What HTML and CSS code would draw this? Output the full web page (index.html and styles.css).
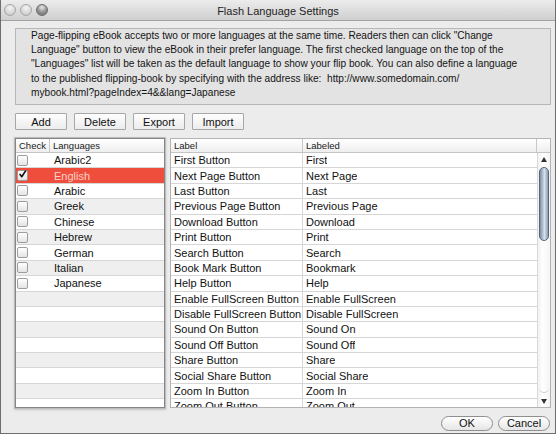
FILE: index.html
```html
<!DOCTYPE html>
<html>
<head>
<meta charset="utf-8">
<title>Flash Language Settings</title>
<link rel="stylesheet" href="styles.css">
</head>
<body>
<div class="window">
  <div class="titlebar">
    <div class="lights">
      <span class="light"></span><span class="light"></span><span class="light light-on"></span>
    </div>
    <div class="title">Flash Language Settings</div>
    <div></div>
  </div>
  <div class="content">
    <div class="desc">Page-flipping eBook accepts two or more languages at the same time. Readers then can click "Change<br>Language" button to view the eBook in their prefer language. The first checked language on the top of the<br>"Languages" list will be taken as the default language to show your flip book. You can also define a language<br>to the published flipping-book by specifying with the address like:&nbsp; http://www.somedomain.com/<br>mybook.html?pageIndex=4&amp;&amp;lang=Japanese</div>
    <div class="toolbar">
      <button class="btn">Add</button>
      <button class="btn">Delete</button>
      <button class="btn">Export</button>
      <button class="btn">Import</button>
    </div>
    <div class="tables">
      <div class="langs">
        <div class="thead">
          <div class="th th-check">Check</div>
          <div class="th">Languages</div>
        </div>
        <div class="lbody">
          <div class="lrow"><div class="cc"><span class="cb"></span></div><div class="lc">Arabic2</div></div>
          <div class="lrow sel"><div class="cc"><span class="cb"><svg viewBox="0 0 11 11" width="11" height="11"><path d="M2.5 5.4 L4.6 8.2 L9.2 1.2" fill="none" stroke="#111" stroke-width="1.9" stroke-linecap="round" stroke-linejoin="round"/></svg></span></div><div class="lc">English</div></div>
          <div class="lrow"><div class="cc"><span class="cb"></span></div><div class="lc">Arabic</div></div>
          <div class="lrow alt"><div class="cc"><span class="cb"></span></div><div class="lc">Greek</div></div>
          <div class="lrow"><div class="cc"><span class="cb"></span></div><div class="lc">Chinese</div></div>
          <div class="lrow alt"><div class="cc"><span class="cb"></span></div><div class="lc">Hebrew</div></div>
          <div class="lrow"><div class="cc"><span class="cb"></span></div><div class="lc">German</div></div>
          <div class="lrow alt"><div class="cc"><span class="cb"></span></div><div class="lc">Italian</div></div>
          <div class="lrow"><div class="cc"><span class="cb"></span></div><div class="lc">Japanese</div></div>
          <div class="lrow alt"></div>
          <div class="lrow"></div>
          <div class="lrow alt"></div>
          <div class="lrow"></div>
          <div class="lrow alt"></div>
          <div class="lrow"></div>
          <div class="lrow alt"></div>
          <div class="lrow"></div>
        </div>
      </div>
      <div class="labels">
        <div class="thead">
          <div class="th th-label">Label</div>
          <div class="th th-labeled">Labeled</div>
          <div class="th th-corner"></div>
        </div>
        <div class="rbody">
          <div class="rrows">
            <div class="rrow"><div class="rc rc1">First Button</div><div class="rc">First</div></div>
            <div class="rrow"><div class="rc rc1">Next Page Button</div><div class="rc">Next Page</div></div>
            <div class="rrow"><div class="rc rc1">Last Button</div><div class="rc">Last</div></div>
            <div class="rrow"><div class="rc rc1">Previous Page Button</div><div class="rc">Previous Page</div></div>
            <div class="rrow"><div class="rc rc1">Download Button</div><div class="rc">Download</div></div>
            <div class="rrow"><div class="rc rc1">Print Button</div><div class="rc">Print</div></div>
            <div class="rrow"><div class="rc rc1">Search Button</div><div class="rc">Search</div></div>
            <div class="rrow"><div class="rc rc1">Book Mark Button</div><div class="rc">Bookmark</div></div>
            <div class="rrow"><div class="rc rc1">Help Button</div><div class="rc">Help</div></div>
            <div class="rrow"><div class="rc rc1">Enable FullScreen Button</div><div class="rc">Enable FullScreen</div></div>
            <div class="rrow"><div class="rc rc1">Disable FullScreen Button</div><div class="rc">Disable FullScreen</div></div>
            <div class="rrow"><div class="rc rc1">Sound On Button</div><div class="rc">Sound On</div></div>
            <div class="rrow"><div class="rc rc1">Sound Off Button</div><div class="rc">Sound Off</div></div>
            <div class="rrow"><div class="rc rc1">Share Button</div><div class="rc">Share</div></div>
            <div class="rrow"><div class="rc rc1">Social Share Button</div><div class="rc">Social Share</div></div>
            <div class="rrow"><div class="rc rc1">Zoom In Button</div><div class="rc">Zoom In</div></div>
            <div class="rrow"><div class="rc rc1">Zoom Out Button</div><div class="rc">Zoom Out</div></div>
          </div>
          <div class="scrollbar">
            <div class="sb-arrow"><svg viewBox="0 0 6 5" width="6" height="5"><path d="M3 0 L6 5 L0 5 Z" fill="#333"/></svg></div>
            <div class="sb-thumb"></div>
            <div class="sb-track"></div>
            <div class="sb-arrow"><svg viewBox="0 0 6 5" width="6" height="5"><path d="M0 0 L6 0 L3 5 Z" fill="#333"/></svg></div>
          </div>
        </div>
      </div>
    </div>
    <div class="footer">
      <button class="pill">OK</button>
      <button class="pill">Cancel</button>
    </div>
  </div>
</div>
</body>
</html>
```

FILE: styles.css
```css
html, body {
  margin: 0;
  padding: 0;
  background: #ececec;
}

.window {
  width: 556px;
  height: 434px;
  box-sizing: border-box;
  border: 1px solid #6e6e6e;
  border-top: none;
  background: #ececec;
  display: flex;
  flex-direction: column;
  font-family: "Liberation Sans", Arial, sans-serif;
  color: #111;
  overflow: hidden;
}

.titlebar {
  height: 21px;
  box-sizing: border-box;
  border-bottom: 1px solid #a3a3a3;
  background: linear-gradient(#ececec, #cfcfcf);
  display: grid;
  grid-template-columns: 1fr auto 1fr;
  align-items: center;
}

.lights {
  display: flex;
  gap: 4px;
  padding-left: 3px;
}

.light {
  width: 12px;
  height: 12px;
  box-sizing: border-box;
  border-radius: 50%;
  border: 1px solid #a6a6a6;
  background: radial-gradient(circle at 50% 30%, #f4f4f4 0%, #d6d6d6 60%, #c4c4c4 100%);
}

.light-on {
  border-color: #6c6c6c;
  background: radial-gradient(circle at 50% 25%, #e8e8e8 0%, #9d9d9d 45%, #7a7a7a 75%, #a9a9a9 100%);
}

.title {
  font-size: 11px;
  color: #1e1e1e;
  white-space: nowrap;
  padding-top: 1px;
}

.content {
  flex: 1;
  display: flex;
  flex-direction: column;
  padding: 7px 4px 0 14px;
}

.desc {
  height: 77px;
  box-sizing: border-box;
  border: 1px solid #b7b7b7;
  background: #e3e3e3;
  padding: 0 0 0 15px;
  font-size: 10.15px;
  line-height: 14.2px;
  white-space: nowrap;
  overflow: hidden;
  color: #141414;
}

.toolbar {
  display: flex;
  gap: 7px;
  margin-top: 8px;
}

.btn {
  width: 52px;
  height: 17px;
  box-sizing: border-box;
  padding: 0;
  border: 1px solid #a7a7a7;
  border-radius: 1px;
  background: linear-gradient(#fefefe, #ececec);
  font-family: inherit;
  font-size: 11px;
  color: #111;
}

.tables {
  display: flex;
  gap: 5px;
  margin-top: 8px;
  height: 270px;
}

.langs {
  width: 150px;
  box-sizing: border-box;
  border: 1px solid #858585;
  box-shadow: 0 0 0 1px #bdbdbd, 0 1px 2px 1px #c4c4c4;
  background: #fff;
  display: flex;
  flex-direction: column;
  overflow: hidden;
}

.labels {
  flex: 1;
  box-sizing: border-box;
  border: 1px solid #b3b3b3;
  background: #fff;
  display: flex;
  flex-direction: column;
  overflow: hidden;
}

.thead {
  height: 14px;
  flex: none;
  box-sizing: border-box;
  display: flex;
  border-bottom: 1px solid #c4c4c4;
  background: linear-gradient(#ffffff, #eeeeee);
}

.th {
  font-size: 9.5px;
  line-height: 13px;
  color: #222;
  padding-left: 3px;
  white-space: nowrap;
}

.th-check {
  width: 34px;
  box-sizing: border-box;
  border-right: 1px solid #c8c8c8;
}

.th-label {
  width: 132px;
  box-sizing: border-box;
  border-right: 1px solid #c8c8c8;
}

.th-labeled {
  flex: 1;
  border-right: 1px solid #c8c8c8;
}

.th-corner {
  width: 13px;
  flex: none;
  padding: 0;
}

.lbody {
  flex: 1;
  overflow: hidden;
}

.lrow {
  height: 15.4px;
  box-sizing: border-box;
  border-bottom: 1px solid #d6d6d6;
  display: flex;
  align-items: center;
  background: #fff;
  font-size: 11px;
}

.lrow.alt {
  background: #efefef;
}

.lrow.sel {
  background: #ef4e3c;
  color: #fbd2cb;
}

.cc {
  width: 34px;
  padding-left: 1px;
  display: flex;
  align-items: center;
}

.lc {
  padding-left: 3px;
  white-space: nowrap;
}

.cb {
  width: 11px;
  height: 11px;
  box-sizing: border-box;
  border: 1px solid #9d9d9d;
  border-radius: 2px;
  background: linear-gradient(#ffffff, #e4e4e4);
  display: flex;
  align-items: center;
  justify-content: center;
}

.cb svg {
  display: block;
  margin-top: -2px;
}

.rbody {
  flex: 1;
  display: flex;
  overflow: hidden;
}

.rrows {
  flex: 1;
  overflow: hidden;
}

.rrow {
  height: 15.4px;
  box-sizing: border-box;
  border-bottom: 1px solid #d6d6d6;
  display: flex;
  align-items: center;
  font-size: 11px;
  color: #111;
}

.rc {
  padding-left: 3px;
  white-space: nowrap;
  overflow: hidden;
  height: 100%;
  display: flex;
  align-items: center;
}

.rc1 {
  width: 132px;
  box-sizing: border-box;
  border-right: 1px solid #d6d6d6;
}

.scrollbar {
  width: 13px;
  flex: none;
  box-sizing: border-box;
  border-left: 1px solid #d9d9d9;
  background: linear-gradient(90deg, #f1f1f1, #ffffff 40%, #f4f4f4);
  display: flex;
  flex-direction: column;
  align-items: center;
}

.sb-arrow {
  height: 12px;
  display: flex;
  align-items: center;
  justify-content: center;
}

.sb-thumb {
  width: 10px;
  height: 74px;
  margin-top: 2px;
  box-sizing: border-box;
  border: 1px solid #56657a;
  border-radius: 5px;
  background: linear-gradient(90deg, #7d8ea6, #c3cfdd 45%, #d9e2ec 55%, #8c9cb2);
}

.sb-track {
  flex: 1;
  width: 10px;
  margin-bottom: 2px;
  border-bottom: 1px solid #c9c9c9;
  border-radius: 0 0 5px 5px;
}

.footer {
  display: flex;
  justify-content: flex-end;
  gap: 5px;
  margin-top: 8px;
  padding-right: 1px;
}

.pill {
  width: 52px;
  height: 15px;
  box-sizing: border-box;
  padding: 0;
  border: 1px solid #8f8f8f;
  border-radius: 8px;
  background: linear-gradient(#ffffff, #e6e6e6);
  font-family: inherit;
  font-size: 11px;
  line-height: 13px;
  color: #111;
}
```
